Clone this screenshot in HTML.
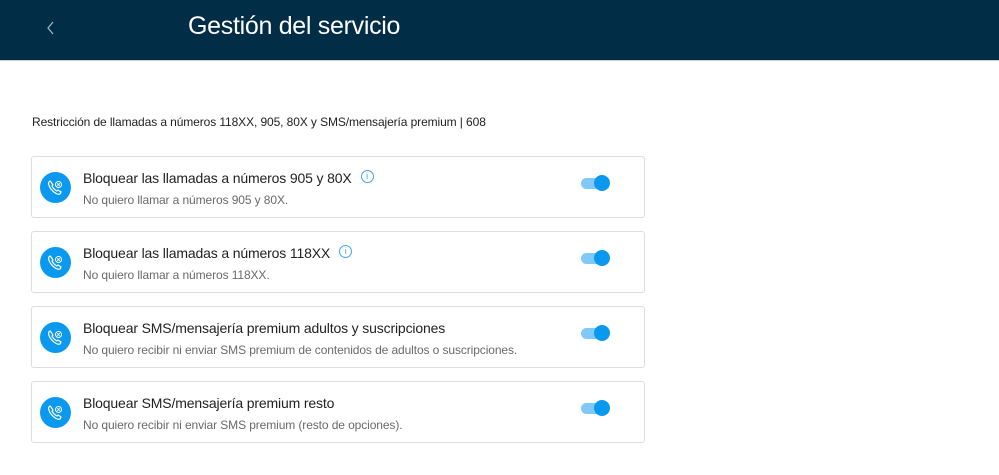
<!DOCTYPE html>
<html><head><meta charset="utf-8"><style>
body{margin:0;width:999px;height:475px;background:#fff;font-family:"Liberation Sans",sans-serif;position:relative;overflow:hidden}
.hdr{position:absolute;left:0;top:0;width:999px;height:60px;background:#022d46;border-bottom:1px solid #ccc}
.hdr .t{position:absolute;left:188px;top:12px;color:#fff;font-size:25px;letter-spacing:-0.3px}
.hdr svg{position:absolute;left:45px;top:20px}
.sub{position:absolute;left:32px;top:115px;font-size:12px;color:#222;letter-spacing:-0.1px}
.card{position:absolute;left:31px;width:612px;height:60px;border:1px solid #ddd;border-radius:3px}
.ic{position:absolute;left:8px;top:15px;width:31px;height:31px;border-radius:50%;background:#0b99f0}
.ic svg{position:absolute;left:7px;top:7px}
.ti{position:absolute;left:51px;top:13px;font-size:14px;color:#222;letter-spacing:-0.15px}
.de{position:absolute;left:51px;top:36px;font-size:12px;color:#6a6a6a;letter-spacing:-0.1px}
.info{display:inline-block;width:11px;height:11px;border:1px solid #3ea3f2;border-radius:50%;color:#3ea3f2;font-size:9px;line-height:11px;text-align:center;margin-left:9px;vertical-align:4px}
.tg{position:absolute;left:549px;top:21px;width:26px;height:11px;border-radius:6px;background:#7fc8f8}
.tg:after{content:"";position:absolute;left:13px;top:-3px;width:16px;height:16px;border-radius:50%;background:#0b99f0}
</style></head><body>
<div class="hdr"><svg width="10" height="16" viewBox="0 0 10 16"><path d="M8 2L3 8l5 6" stroke="#9fb3c0" stroke-width="1.3" fill="none"/></svg><div class="t">Gestión del servicio</div></div>
<div class="sub">Restricción de llamadas a números 118XX, 905, 80X y SMS/mensajería premium | 608</div>
<div class="card" style="top:156px"><div class="ic"><svg width="17" height="17" viewBox="0 0 17 17"><path d="M3 2c-2 1-2 4 1 8s7 6 9 5l1-2-3-2-1 1c-2-1-4-3-5-5l1-1-2-3z" stroke="#fff" fill="none" stroke-width="1.2"/><circle cx="11.5" cy="5.5" r="3" stroke="#fff" fill="none"/><path d="M10.3 4.3l2.4 2.4M12.7 4.3l-2.4 2.4" stroke="#fff"/></svg></div><div class="ti">Bloquear las llamadas a números 905 y 80X<span class="info">i</span></div><div class="de">No quiero llamar a números 905 y 80X.</div><div class="tg"></div></div>
<div class="card" style="top:231px"><div class="ic"><svg width="17" height="17" viewBox="0 0 17 17"><path d="M3 2c-2 1-2 4 1 8s7 6 9 5l1-2-3-2-1 1c-2-1-4-3-5-5l1-1-2-3z" stroke="#fff" fill="none" stroke-width="1.2"/><circle cx="11.5" cy="5.5" r="3" stroke="#fff" fill="none"/><path d="M10.3 4.3l2.4 2.4M12.7 4.3l-2.4 2.4" stroke="#fff"/></svg></div><div class="ti">Bloquear las llamadas a números 118XX<span class="info">i</span></div><div class="de">No quiero llamar a números 118XX.</div><div class="tg"></div></div>
<div class="card" style="top:306px"><div class="ic"><svg width="17" height="17" viewBox="0 0 17 17"><path d="M3 2c-2 1-2 4 1 8s7 6 9 5l1-2-3-2-1 1c-2-1-4-3-5-5l1-1-2-3z" stroke="#fff" fill="none" stroke-width="1.2"/><circle cx="11.5" cy="5.5" r="3" stroke="#fff" fill="none"/><path d="M10.3 4.3l2.4 2.4M12.7 4.3l-2.4 2.4" stroke="#fff"/></svg></div><div class="ti">Bloquear SMS/mensajería premium adultos y suscripciones</div><div class="de">No quiero recibir ni enviar SMS premium de contenidos de adultos o suscripciones.</div><div class="tg"></div></div>
<div class="card" style="top:381px"><div class="ic"><svg width="17" height="17" viewBox="0 0 17 17"><path d="M3 2c-2 1-2 4 1 8s7 6 9 5l1-2-3-2-1 1c-2-1-4-3-5-5l1-1-2-3z" stroke="#fff" fill="none" stroke-width="1.2"/><circle cx="11.5" cy="5.5" r="3" stroke="#fff" fill="none"/><path d="M10.3 4.3l2.4 2.4M12.7 4.3l-2.4 2.4" stroke="#fff"/></svg></div><div class="ti">Bloquear SMS/mensajería premium resto</div><div class="de">No quiero recibir ni enviar SMS premium (resto de opciones).</div><div class="tg"></div></div>
</body></html>
